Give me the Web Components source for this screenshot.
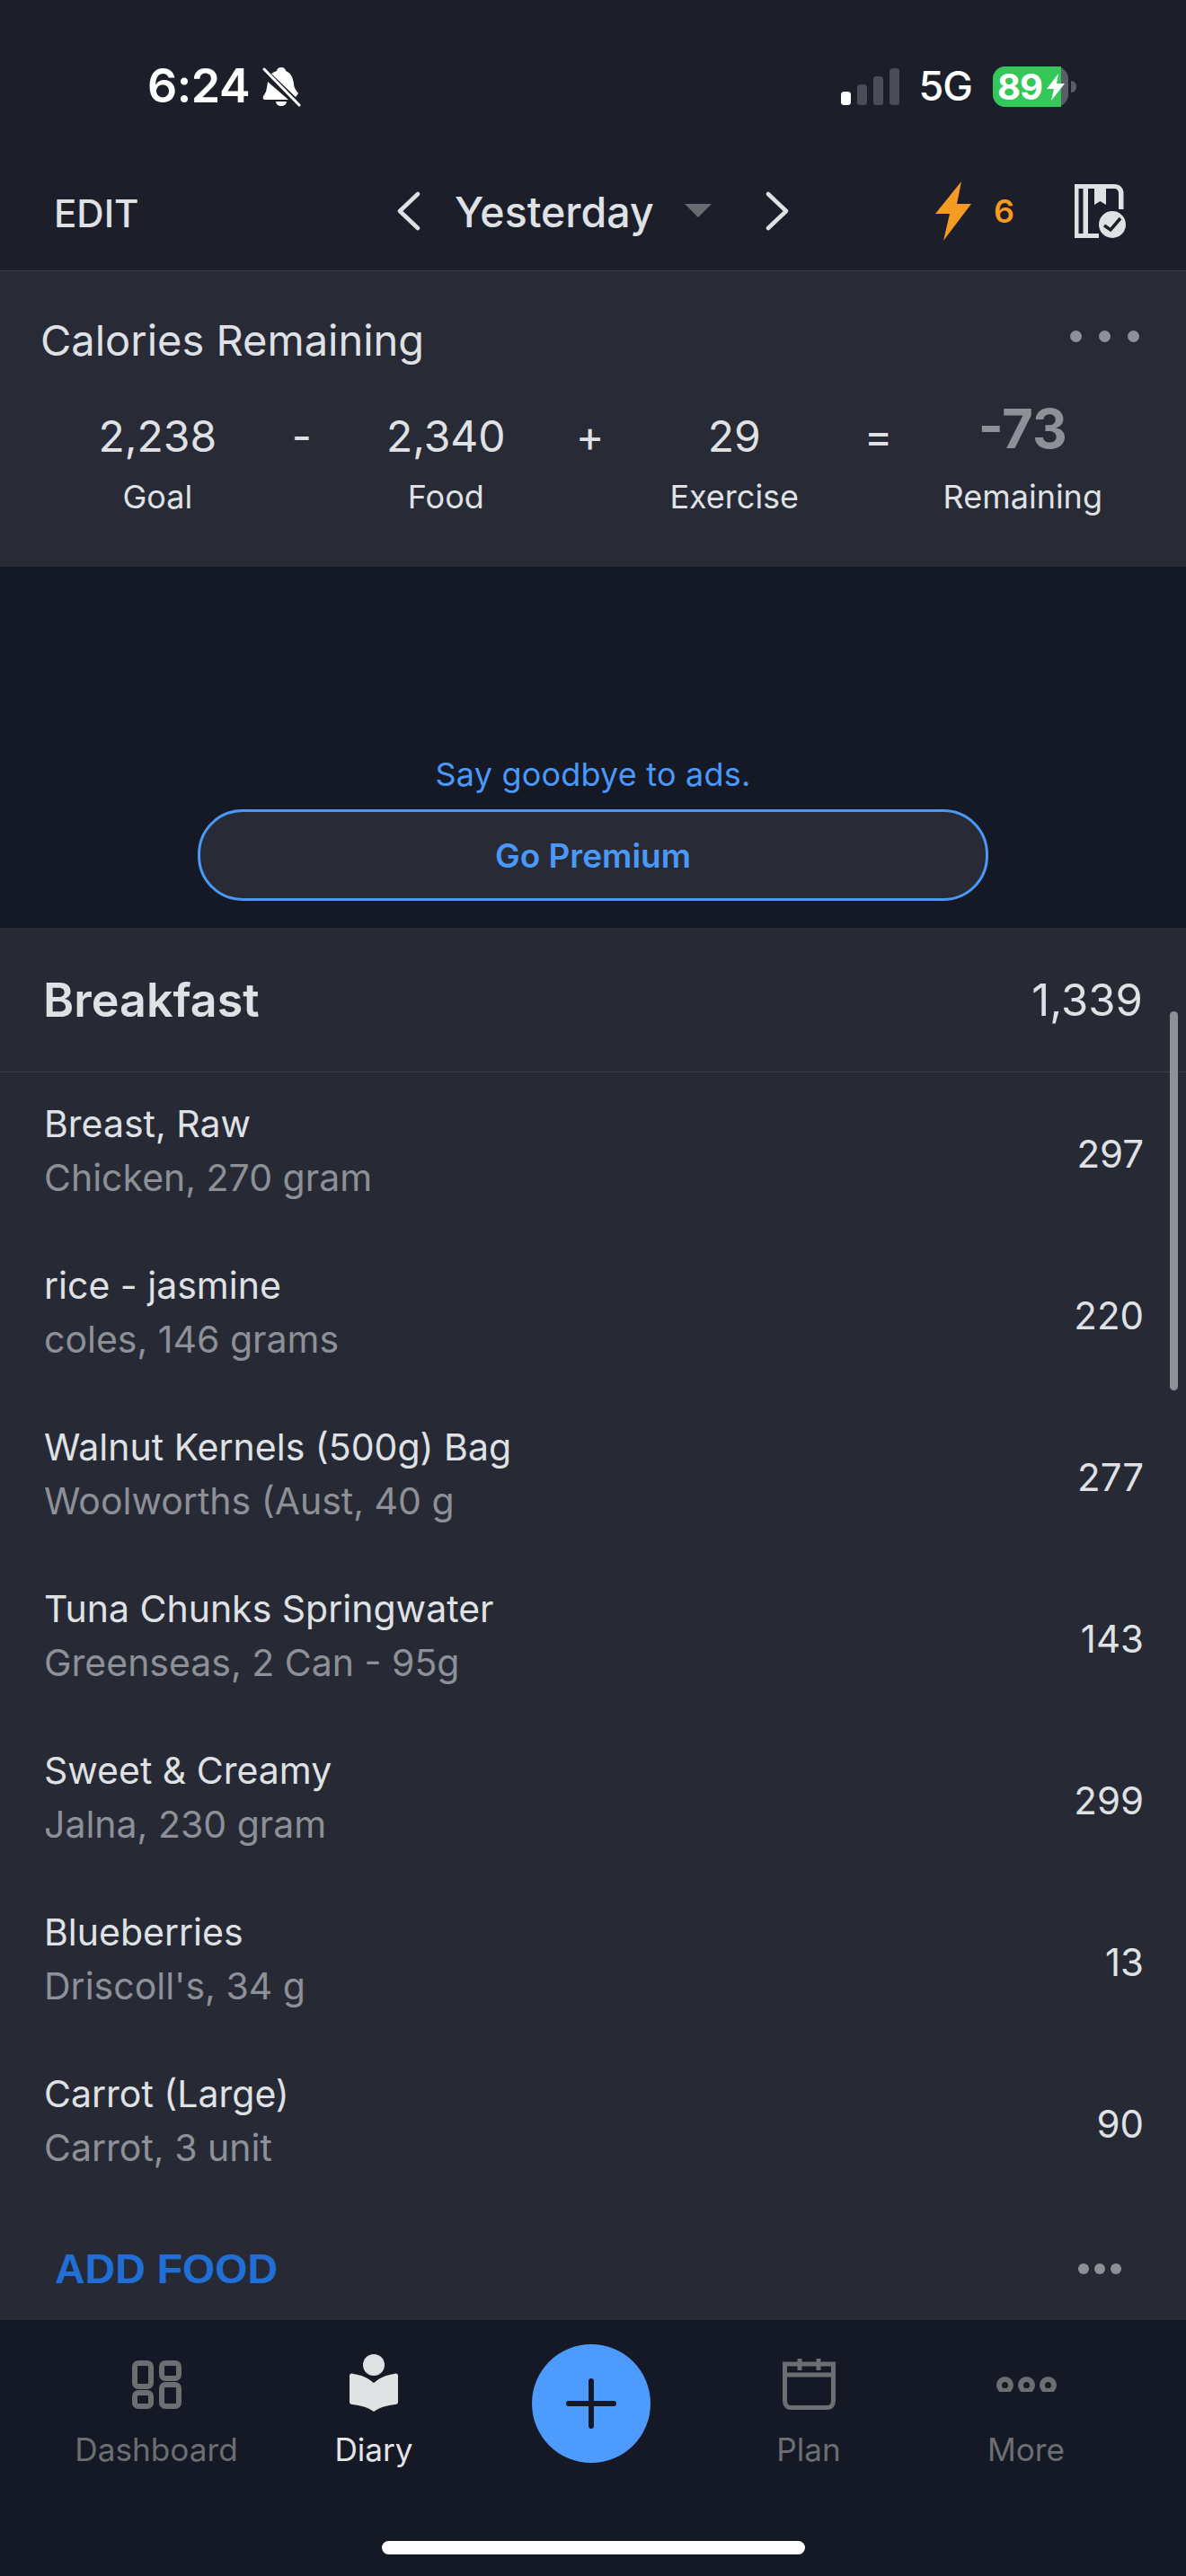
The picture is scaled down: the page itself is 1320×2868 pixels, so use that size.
<!DOCTYPE html>
<html lang="en">
<head>
<meta charset="utf-8">
<title>Diary</title>
<style>
  html, body { margin: 0; padding: 0; background: #151925; }
  body { width: 1320px; height: 2868px; overflow: hidden; font-family: Inter, "Liberation Sans", sans-serif; }
  diary-app { width: 1320px; height: 2868px; }
</style>
</head>
<body>
<diary-app>
  <status-bar slot="top"></status-bar>
  <nav-bar slot="top"></nav-bar>
  <calorie-card slot="top"></calorie-card>
  <premium-ad slot="top"></premium-ad>
  <meal-section title="Breakfast" total="1,339">
    <food-row name="Breast, Raw" detail="Chicken, 270 gram" cal="297"></food-row>
    <food-row name="rice - jasmine" detail="coles, 146 grams" cal="220"></food-row>
    <food-row name="Walnut Kernels (500g) Bag" detail="Woolworths (Aust, 40 g" cal="277"></food-row>
    <food-row name="Tuna Chunks Springwater" detail="Greenseas, 2 Can - 95g" cal="143"></food-row>
    <food-row name="Sweet &amp; Creamy" detail="Jalna, 230 gram" cal="299"></food-row>
    <food-row name="Blueberries" detail="Driscoll's, 34 g" cal="13"></food-row>
    <food-row name="Carrot (Large)" detail="Carrot, 3 unit" cal="90"></food-row>
  </meal-section>
  <tab-bar slot="bottom"></tab-bar>
</diary-app>

<script>
class DiaryApp extends HTMLElement {
    connectedCallback() {
        this.attachShadow({ mode: 'open' });
        this.shadowRoot.innerHTML = `
            <style>
                :host { display: flex; flex-direction: column; position: relative; overflow: hidden; color: #dfe1e5; }
                .scroll { flex: 1; min-height: 0; overflow: hidden; }
                .thumb {
                    position: absolute; left: 1302px; top: 1126px;
                    width: 9px; height: 422px; border-radius: 5px; background: #8e9098;
                }
            </style>
            <slot name="top"></slot>
            <div class="scroll"><slot></slot></div>
            <slot name="bottom"></slot>
            <div class="thumb"></div>
        `;
    }
}

class StatusBar extends HTMLElement {
    connectedCallback() {
        this.attachShadow({ mode: 'open' });
        this.shadowRoot.innerHTML = `
            <style>
                :host {
                    display: flex; align-items: flex-start; justify-content: space-between;
                    height: 174px; box-sizing: border-box; padding: 72px 122px 0 164px;
                    background: #1c1f29; color: #fff;
                }
                .left, .right { display: flex; align-items: center; height: 48px; }
                .time { font-size: 52px; font-weight: 600; line-height: 48px; letter-spacing: -0.5px; }
                .bell { margin-left: 14px; }
                .net { font-size: 45px; font-weight: 500; line-height: 48px; margin: 0 23px 0 22px; letter-spacing: -1px; }
                .signal { display: block; }
                .battery { position: relative; display: flex; width: 84px; height: 45px; border-radius: 14px; background: #5b5d66; }
                .fill { width: 76px; border-radius: 14px 0 0 14px; background: #34c759; }
                .pct {
                    position: absolute; left: 5px; top: 0; height: 45px;
                    font-size: 40px; font-weight: 700; line-height: 45px; letter-spacing: -1px;
                }
                .charge { position: absolute; left: 60px; top: 8px; }
                .nub { width: 6px; height: 13px; margin-left: 3px; border-radius: 0 6px 6px 0; background: #5b5d66; }
            </style>
            <div class="left">
                <span class="time">6:24</span>
                <svg class="bell" width="43" height="45" viewBox="0 0 43 45">
                    <path fill="#fff" d="M21 1c3 0 5 2 5 4 6 2 8 8 9 14 0 5 3 8 5 11l-3 4L10 8c2-1 3-2 6-3 0-2 2-4 5-4zM6 17 29 37H3c-2 0-3-2-2-4 3-3 4-8 5-16zM15 39h12c0 3-3 5-6 5s-6-2-6-5z"/>
                    <path stroke="#fff" stroke-width="3" stroke-linecap="round" d="M2 3l39 40"/>
                </svg>
            </div>
            <div class="right">
                <svg class="signal" width="65" height="41" viewBox="0 0 65 41">
                    <rect x="0" y="26" width="11" height="15" rx="3.5" fill="#fff"/>
                    <rect x="18" y="18" width="11" height="23" rx="3.5" fill="#4a4c56"/>
                    <rect x="36" y="9" width="11" height="32" rx="3.5" fill="#4a4c56"/>
                    <rect x="54" y="0" width="11" height="41" rx="3.5" fill="#4a4c56"/>
                </svg>
                <span class="net">5G</span>
                <div class="battery">
                    <div class="fill"></div>
                    <span class="pct">89</span>
                    <svg class="charge" width="20" height="30" viewBox="0 0 20 30">
                        <path fill="#fff" d="M13 0 0 17h8L5 30 20 11h-9z"/>
                    </svg>
                </div>
                <div class="nub"></div>
            </div>
        `;
    }
}

class NavBar extends HTMLElement {
    connectedCallback() {
        this.attachShadow({ mode: 'open' });
        this.shadowRoot.innerHTML = `
            <style>
                :host {
                    display: grid; grid-template-columns: 382px 500px 1fr; align-items: center;
                    height: 128px; box-sizing: border-box; padding: 0 67px 6px 60px;
                    background: #1c1f29; border-bottom: 1px solid #3b3e49; color: #dfe1e5;
                }
                .edit { font-size: 42px; font-weight: 500; margin-top: 6px; }
                .date { display: flex; align-items: center; }
                .title { font-size: 46.5px; font-weight: 500; margin: 3px 0 0 38px; }
                .drop { width: 0; height: 0; margin: 0 60px 0 34px; border: 15px solid transparent; border-bottom: 0; border-top: 15px solid #6a6b6f; }
                .streak { display: flex; align-items: center; justify-content: flex-end; }
                .count { font-size: 36px; font-weight: 600; color: #f59b23; margin: 0 67px 0 25px; }
                svg { display: block; flex: none; }
            </style>
            <span class="edit">EDIT</span>
            <div class="date">
                <svg width="26" height="44" viewBox="0 0 26 44"><path fill="none" stroke="#dfe1e5" stroke-width="4.5" stroke-linecap="round" stroke-linejoin="round" d="M23 3 3 22l20 19"/></svg>
                <span class="title">Yesterday</span>
                <span class="drop"></span>
                <svg width="26" height="44" viewBox="0 0 26 44"><path fill="none" stroke="#dfe1e5" stroke-width="4.5" stroke-linecap="round" stroke-linejoin="round" d="M3 3l20 19L3 41"/></svg>
            </div>
            <div class="streak">
                <svg width="40" height="66" viewBox="0 0 40 66"><path fill="#f59b23" d="M29 0 0 36h16L9 66 40 25H24z"/></svg>
                <span class="count">6</span>
                <svg width="57" height="60" viewBox="0 0 57 60">
                    <!-- book cover with spine band and bookmark -->
                    <path fill="#e0e1e3" fill-rule="evenodd" d="M0 0h44c6 0 10.500 4 10.500 10v18h-5.500V10c0-3-2-5-5-5h-9v18l-6.500-4-6.500 4V5h-7v50h12v5H0zM4.500 5v50h5V5z"/>
                    <circle cx="42" cy="45" r="18" fill="#1c1f29"/>
                    <circle cx="42" cy="45" r="15" fill="#e0e1e3"/>
                    <path fill="none" stroke="#1c1f29" stroke-width="3.5" d="M33 46l7 5 11-13"/>
                </svg>
            </div>
        `;
    }
}

class CalorieCard extends HTMLElement {
    connectedCallback() {
        this.attachShadow({ mode: 'open' });
        const cell = (value, label, cls = '') => `
            <div class="cell"><span class="value ${cls}">${value}</span><span class="label">${label}</span></div>`;
        this.shadowRoot.innerHTML = `
            <style>
                :host {
                    display: block; height: 329px; box-sizing: border-box;
                    padding: 50px 52px 0 45px; background: #282b36; color: #dfe1e5;
                }
                .head { display: flex; justify-content: space-between; align-items: flex-start; }
                .title { font-size: 47px; line-height: 54px; }
                .dots { display: flex; gap: 19px; margin-top: 16px; }
                .dots i { width: 13px; height: 13px; border-radius: 50%; background: #8e9098; }
                .sums { display: grid; grid-template-columns: repeat(7, 160.5px); margin: 52px 0 0 50px; }
                .cell, .op { display: flex; flex-direction: column; align-items: center; }
                .value { height: 56px; font-size: 48px; line-height: 56px; white-space: nowrap; }
                .value.over { margin: -9px 0 9px; font-size: 60px; font-weight: 700; color: #8e9098; }
                .label { margin-top: 17px; font-size: 36px; line-height: 44px; white-space: nowrap; }
                .op { font-size: 48px; line-height: 56px; }
            </style>
            <div class="head"><span class="title">Calories Remaining</span><span class="dots"><i></i><i></i><i></i></span></div>
            <div class="sums">
                ${cell('2,238', 'Goal')}
                <span class="op">-</span>
                ${cell('2,340', 'Food')}
                <span class="op">+</span>
                ${cell('29', 'Exercise')}
                <span class="op">=</span>
                ${cell('-73', 'Remaining', 'over')}
            </div>
        `;
    }
}

class PremiumAd extends HTMLElement {
    connectedCallback() {
        this.attachShadow({ mode: 'open' });
        this.shadowRoot.innerHTML = `
            <style>
                :host {
                    display: flex; flex-direction: column; align-items: center;
                    height: 402px; box-sizing: border-box; padding-top: 208px;
                    background: #151925; color: #4a98f8;
                }
                .pitch { font-size: 36px; line-height: 46px; letter-spacing: 0.2px; }
                .go {
                    width: 880px; height: 102px; box-sizing: border-box; margin-top: 16px;
                    display: flex; align-items: center; justify-content: center;
                    border: 3px solid #4a98f8; border-radius: 50px; background: #282b36;
                    font-size: 37px; font-weight: 600;
                }
            </style>
            <span class="pitch">Say goodbye to ads.</span>
            <div class="go">Go Premium</div>
        `;
    }
}

class MealSection extends HTMLElement {
    connectedCallback() {
        this.attachShadow({ mode: 'open' });
        this.shadowRoot.innerHTML = `
            <style>
                :host { display: block; height: 100%; background: #272a34; }
                .head {
                    display: flex; justify-content: space-between; align-items: center;
                    height: 161px; box-sizing: border-box; padding: 0 48px 0 48px;
                    border-bottom: 1px solid #3b3e49; color: #dfe1e5;
                }
                .title { font-size: 52px; font-weight: 600; }
                .total { font-size: 49px; }
                .foot { display: flex; justify-content: space-between; align-items: center; height: 144px; padding: 0 72px 0 61px; }
                .add { font-family: "Liberation Sans", Arial, sans-serif; font-size: 46.5px; font-weight: 700; color: #206ed6; }
                .dots { display: flex; gap: 6px; }
                .dots i { width: 12px; height: 12px; border-radius: 50%; background: #8e9098; }
            </style>
            <div class="head"><span class="title">${this.getAttribute('title')}</span><span class="total">${this.getAttribute('total')}</span></div>
            <slot></slot>
            <div class="foot"><span class="add">ADD FOOD</span><span class="dots"><i></i><i></i><i></i></span></div>
        `;
    }
}

class FoodRow extends HTMLElement {
    connectedCallback() {
        this.attachShadow({ mode: 'open' });
        this.shadowRoot.innerHTML = `
            <style>
                :host {
                    display: flex; justify-content: space-between; align-items: center;
                    height: 180px; box-sizing: border-box; padding: 0 47px 0 49px;
                }
                .name { font-size: 41px; line-height: 60px; color: #dfe1e5; }
                .detail { font-size: 41px; line-height: 60px; color: #8e9098; }
                .cal { font-size: 42px; color: #dfe1e5; }
                .text { display: flex; flex-direction: column; padding-bottom: 7px; }
            </style>
            <div class="text"><span class="name"></span><span class="detail"></span></div>
            <span class="cal"></span>
        `;
        this.shadowRoot.querySelector('.name').textContent = this.getAttribute('name');
        this.shadowRoot.querySelector('.detail').textContent = this.getAttribute('detail');
        this.shadowRoot.querySelector('.cal').textContent = this.getAttribute('cal');
    }
}

class TabBar extends HTMLElement {
    connectedCallback() {
        this.attachShadow({ mode: 'open' });
        const grey = '#6c6e72';
        this.shadowRoot.innerHTML = `
            <style>
                :host {
                    display: grid; grid-template-columns: repeat(5, 242px); justify-content: center;
                    height: 285px; box-sizing: border-box; padding: 27px 4px 0 0; position: relative;
                    background: #151925; color: ${grey};
                }
                .tab { display: flex; flex-direction: column; align-items: center; font-size: 35.2px; }
                .tab.on { color: #e4e5e8; }
                .icon { height: 76px; display: flex; align-items: flex-end; }
                .tab span { margin-top: 19px; line-height: 44px; }
                .fab { justify-self: center; width: 132px; height: 132px; border-radius: 50%; background: #4d9bff; display: flex; align-items: center; justify-content: center; }
                .home {
                    position: absolute; left: 425px; top: 246px;
                    width: 471px; height: 15px; border-radius: 8px; background: #fff;
                }
                svg { display: block; }
            </style>
            <div class="tab">
                <div class="icon">
                    <svg style="margin-bottom:4px" width="55" height="54" viewBox="0 0 55 54" fill="none" stroke="${grey}" stroke-width="6">
                        <rect x="3" y="3" width="18" height="26" rx="4"/><rect x="33" y="3" width="19" height="17" rx="4"/>
                        <rect x="3" y="36" width="18" height="15" rx="4"/><rect x="33" y="27" width="19" height="24" rx="4"/>
                    </svg>
                </div>
                <span>Dashboard</span>
            </div>
            <div class="tab on">
                <div class="icon">
                    <svg style="margin-bottom:1px" width="54" height="64" viewBox="0 0 54 64">
                        <ellipse cx="27" cy="12" rx="12" ry="12" fill="#e0e1e3"/>
                        <path fill="#e0e1e3" d="M0 24c0-2 2-3 4-2 9 1 16 4 23 10 7-6 14-9 23-10 2-1 4 0 4 2v29c0 2-1 3-3 3-9 1-17 3-24 8-7-5-15-7-24-8-2 0-3-1-3-3z"/>
                    </svg>
                </div>
                <span>Diary</span>
            </div>
            <div class="fab">
                <svg width="56" height="56" viewBox="0 0 56 56"><path fill="none" stroke="#151925" stroke-width="6" stroke-linecap="round" d="M28 3v50M3 28h50"/></svg>
            </div>
            <div class="tab">
                <div class="icon">
                    <svg style="margin-bottom:3px" width="59" height="58" viewBox="0 0 59 58" fill="none" stroke="${grey}" stroke-width="5">
                        <path d="M2.500 7h54v41c0 5-3 7.500-7 7.500H9.500c-4 0-7-2.500-7-7.500zM2.500 19h54"/>
                        <path d="M19 1v13M40 1v13"/>
                    </svg>
                </div>
                <span>Plan</span>
            </div>
            <div class="tab">
                <div class="icon">
                    <svg style="margin-bottom:23px" width="67" height="17" viewBox="0 0 67 17" fill="none" stroke="${grey}" stroke-width="6">
                        <circle cx="9.500" cy="9.500" r="6.500"/><circle cx="33.500" cy="9.500" r="6.500"/><circle cx="57.500" cy="9.500" r="6.500"/>
                    </svg>
                </div>
                <span>More</span>
            </div>
            <div class="home"></div>
        `;
    }
}

customElements.define('diary-app', DiaryApp);
customElements.define('status-bar', StatusBar);
customElements.define('nav-bar', NavBar);
customElements.define('calorie-card', CalorieCard);
customElements.define('premium-ad', PremiumAd);
customElements.define('meal-section', MealSection);
customElements.define('food-row', FoodRow);
customElements.define('tab-bar', TabBar);
</script>
</body>
</html>
